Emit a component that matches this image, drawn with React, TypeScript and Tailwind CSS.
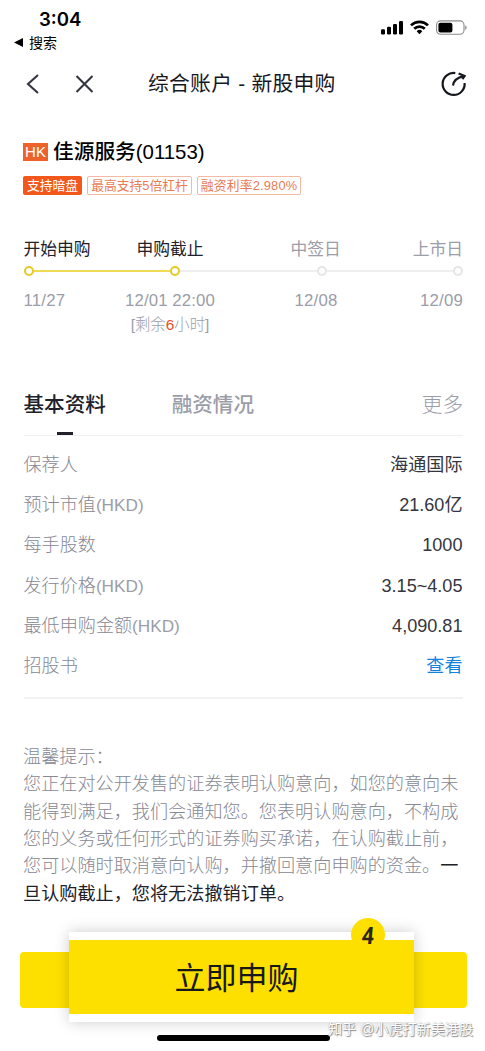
import React from 'react';

const details = [
  { label: '保荐人', value: '海通国际' },
  { label: '预计市值', unit: '(HKD)', value: '21.60亿' },
  { label: '每手股数', value: '1000' },
  { label: '发行价格', unit: '(HKD)', value: '3.15~4.05' },
  { label: '最低申购金额', unit: '(HKD)', value: '4,090.81' },
  { label: '招股书', value: '查看', link: true },
];

const notice = [
  '温馨提示：',
  '您正在对公开发售的证券表明认购意向，如您的意向未',
  '能得到满足，我们会通知您。您表明认购意向，不构成',
  '您的义务或任何形式的证券购买承诺，在认购截止前，',
];

function StatusBar() {
  return (
    <header className="flex h-[56px] justify-between">
      <div className="pt-[7px] text-black">
        <div className="pl-[39px] font-['Inter','Liberation_Sans',sans-serif] text-[18.6px] leading-[24px] font-semibold">3:04</div>
        <div className="flex h-[23px] items-center gap-[6px] pl-[14px]">
          <svg width="9" height="9" viewBox="0 0 9 9"><path d="M0 4.5 9 0V9Z" fill="#000" /></svg>
          <span className="text-[14px] leading-[20px]">搜索</span>
        </div>
      </div>
      <div className="flex items-start gap-[7px] pt-[20px] pr-[18px]">
        <svg width="22" height="15" viewBox="0 0 22 15" fill="#000">
          <rect x="0" y="9.3" width="4" height="5.2" rx="1.2" />
          <rect x="6" y="6.8" width="4" height="7.7" rx="1.2" />
          <rect x="12" y="4" width="4" height="10.5" rx="1.2" />
          <rect x="18" y="1" width="4" height="13.5" rx="1.2" />
        </svg>
        <svg width="19" height="15" viewBox="0 0 19 15" fill="none" stroke="#000" strokeWidth="2.7">
          <path d="M1 5.4a12.2 12.2 0 0 1 17 0" />
          <path d="M4.2 8.7a7.6 7.6 0 0 1 10.6 0" />
          <path d="M6.7 11.2a4 4 0 0 1 5.6 0L9.5 14.3Z" fill="#000" stroke="none" />
        </svg>
        <svg width="31" height="15" viewBox="0 0 31 15">
          <rect x="0.6" y="0.9" width="27.4" height="13.4" rx="4" fill="none" stroke="#8c8c8c" strokeWidth="1.1" />
          <rect x="2.4" y="2.8" width="14" height="9.7" rx="2" fill="#000" />
          <path d="M29.3 5.3c1.7.8 1.7 3.8 0 4.7Z" fill="#777" />
        </svg>
      </div>
    </header>
  );
}

function NavBar() {
  return (
    <nav className="flex h-[56px] items-center pr-[18px] pl-[26px]">
      <svg width="14" height="20" viewBox="0 0 14 20" fill="none" stroke="#34353f" strokeWidth="2.1"><path d="M12 1 2 10l10 9" /></svg>
      <svg className="ml-[35px]" width="19" height="18" viewBox="0 0 19 18" fill="none" stroke="#34353f" strokeWidth="2.1"><path d="m1.5 1 16 16M17.5 1l-16 16" /></svg>
      <h1 className="ml-[54px] text-[20.8px] leading-[28px] font-normal tracking-[0.25px] whitespace-nowrap text-[#17181f]">综合账户 - 新股申购</h1>
      <svg className="ml-auto" width="26" height="26" viewBox="0 0 26 26" fill="none" stroke="#17181f" strokeWidth="2.2">
        <path d="M14.3 2.1A11 11 0 1 0 23.6 12" />
        <path d="M12 14.5C12.6 10 16 6.6 22.8 5.2" />
        <path d="M17.6 2.4 23.6 5l-2.2 3" />
      </svg>
    </nav>
  );
}

function Dot({ active = false }: { active?: boolean }) {
  return <span className={`size-[10px] shrink-0 rounded-full border-[2.5px] bg-white ${active ? 'border-[#e5ca25]' : 'border-[#e5e5e6]'}`} />;
}

function Timeline() {
  return (
    <section className="pt-[43px] pr-[22px] pl-[23.5px] text-[#9b9da9]">
      <div className="flex h-[24px] items-center text-[16.8px] leading-[24px] whitespace-nowrap">
        <span className="w-[113px] text-[#20212a]">开始申购</span>
        <span className="w-[154px] text-[#20212a]">申购截止</span>
        <span>中签日</span>
        <span className="ml-auto">上市日</span>
      </div>
      <div className="mt-[4px] flex h-[10px] items-center">
        <Dot active />
        <span className="h-[2px] w-[136px] bg-[#efda55]" />
        <Dot active />
        <span className="h-[2px] w-[137px] bg-[#eeeeef]" />
        <Dot />
        <span className="h-[2px] flex-1 bg-[#eeeeef]" />
        <Dot />
      </div>
      <div className="mt-[12px] flex text-[16.8px] leading-[25px] font-light whitespace-nowrap">
        <span className="w-[91px] tracking-[0.2px]">11/27</span>
        <div className="flex w-[111px] flex-col items-center">
          <span className="tracking-[0.1px]">12/01 22:00</span>
          <span className="text-[15.4px] leading-[23px]">[剩余<b className="font-medium text-[#ee4d23]">6</b>小时]</span>
        </div>
        <span className="ml-[69px] tracking-[0.2px]">12/08</span>
        <span className="ml-auto tracking-[0.2px]">12/09</span>
      </div>
    </section>
  );
}

function PurchaseBar() {
  return (
    <div className="mt-[24px] grid grid-cols-[20px_49px_345px_53px_18px] grid-rows-[20px_56px_14px]">
      <div className="col-start-2 col-end-5 row-start-2 rounded-[4px] bg-[#fee000]" />
      <div className="relative col-start-3 row-start-1 row-end-4 bg-white py-[8px] shadow-[0_0_14px_rgba(0,0,0,0.2)]">
        <button className="flex h-[74.5px] w-full items-center justify-center bg-[#fee000] pt-[4px] pr-[10px] text-[31px] leading-[44px] text-[#17181a]">立即申购</button>
        <span className="absolute top-[-14px] left-[282px] flex size-[34px] items-center justify-center rounded-full bg-[#fee000] pt-[2px] font-['Roboto',sans-serif] text-[24px] leading-[34px] font-bold text-[#2a2611]">
          <span className="scale-x-90 -skew-x-6">4</span>
        </span>
      </div>
    </div>
  );
}

export default function App() {
  return (
    <main className="flex h-[1051px] w-[485px] flex-col overflow-hidden bg-white font-['Liberation_Sans','Noto_Sans_CJK_SC',sans-serif]">
      <StatusBar />
      <NavBar />
      <section className="pt-[26px] pl-[23px]">
        <div className="flex h-[28px] items-center">
          <span className="flex h-[18px] w-[25px] items-center justify-center bg-[#ed622a] text-[15px] leading-[18px] text-white">HK</span>
          <h2 className="ml-[5px] text-[20.7px] leading-[28px] whitespace-nowrap text-black"><span className="font-medium">佳源服务</span><span className="text-[20.4px]">(01153)</span></h2>
        </div>
        <div className="mt-[10px] flex gap-[5px] text-[12.8px] leading-[17px] whitespace-nowrap">
          <span className="flex h-[19px] w-[59px] items-center justify-center rounded-[2px] bg-[#f2571b] text-white">支持暗盘</span>
          <span className="flex h-[19px] w-[105px] items-center justify-center rounded-[2px] border border-[#f2b9a3] text-[#e87b55]">最高支持5倍杠杆</span>
          <span className="flex h-[19px] w-[104px] items-center justify-center rounded-[2px] border border-[#f2b9a3] tracking-[0.2px] text-[#e87b55]">融资利率2.980%</span>
        </div>
      </section>
      <Timeline />
      <div className="mt-[50px] mr-[22px] ml-[23.5px] flex h-[50px] shrink-0 justify-between border-b border-[#eeeff1] text-[20.6px] leading-[37px] text-[#9b9da9]">
        <div className="flex flex-col items-center">
          <span className="font-medium text-[#20212a]">基本资料</span>
          <i className="mt-[9px] h-[3px] w-[16px] bg-[#20212a]" />
        </div>
        <span className="mr-[102px] font-medium">融资情况</span>
        <span className="font-light">更多</span>
      </div>
      <dl className="mr-[22.5px] ml-[23.5px] border-b-2 border-[#f2f2f4] pt-[9px] pb-[11px] text-[18.1px] leading-[40.2px]">
        {details.map((item) => (
          <div key={item.label} className="flex h-[40.2px] justify-between">
            <dt className="font-light text-[#868894]">{item.label}<span className="text-[17.2px] text-[#9b9da9]">{item.unit}</span></dt>
            <dd className={item.link ? 'text-[#1583dc]' : 'text-[#353640]'}>{item.value}</dd>
          </div>
        ))}
      </dl>
      <section className="mt-[45px] pl-[23px] text-[18.15px] leading-[27.3px] font-light whitespace-nowrap text-[#868894]">
        {notice.map((line) => <p key={line}>{line}</p>)}
        <p>您可以随时取消意向认购，并撤回意向申购的资金。<span className="font-normal text-[#20212a]">一</span></p>
        <p className="font-normal text-[#20212a]">旦认购截止，您将无法撤销订单。</p>
      </section>
      <PurchaseBar />
      <footer className="relative h-[29px] shrink-0">
        <div className="ml-[157px] pt-[13px]"><div className="h-[6px] w-[173px] rounded-full bg-black" /></div>
        <span className="absolute top-[-4px] right-[12px] text-[14.1px] leading-[22px] whitespace-nowrap text-white [text-shadow:1px_1px_1px_#888,0_0_1px_#999]">知乎 @小虎打新美港股</span>
      </footer>
    </main>
  );
}
